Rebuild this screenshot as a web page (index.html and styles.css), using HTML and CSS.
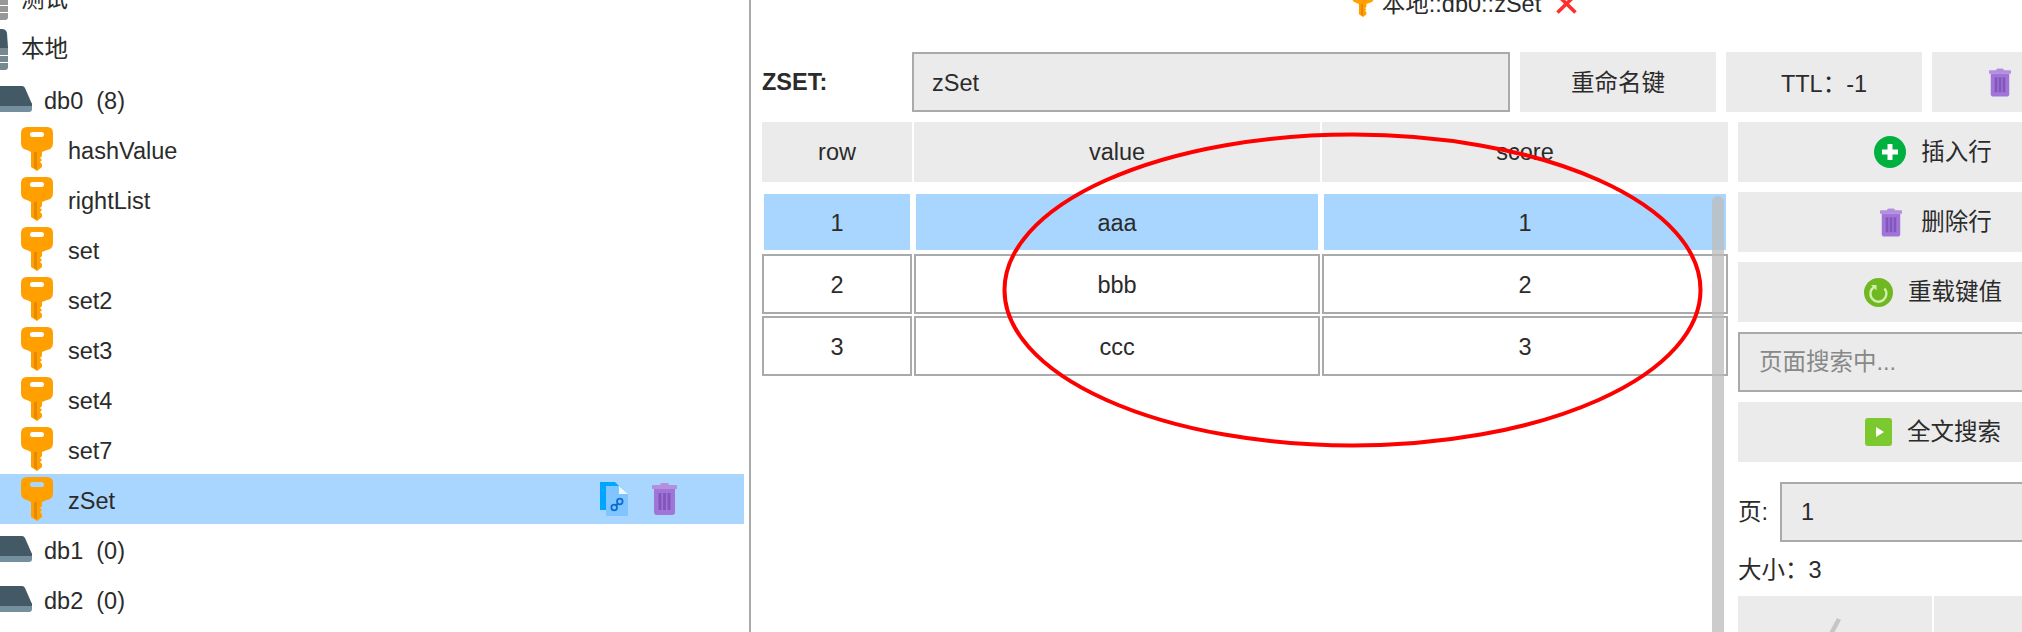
FILE: index.html
```html
<!DOCTYPE html>
<html lang="zh">
<head>
<meta charset="utf-8">
<title>本地::db0::zSet</title>
<link rel="stylesheet" href="styles.css">
</head>
<body>
<svg class="defs" width="0" height="0" aria-hidden="true">
  <symbol id="key" viewBox="0 0 32 44">
    <path fill="#ff9f00" fill-rule="evenodd" d="M6 0H26Q32 0 32 6V16Q32 22 26 23L21 25V29L19 31L21 33L19 35L21 37V40L16 44L10 40V25L6 23Q0 22 0 16V6Q0 0 6 0ZM11.5 5Q9 5 9 7.5T11.5 10H20.5Q23 10 23 7.5T20.5 5Z"/>
    <path fill="#e88a00" d="M13 25H16V42.5L13 40.5Z"/>
  </symbol>
  <symbol id="db" viewBox="0 0 40 26">
    <path fill="#74909e" d="M0 17H40V23Q40 26 37 26H3Q0 26 0 23Z"/>
    <path fill="#435a66" d="M6 0H30Q32 0 33 2L40 18V20H0V18L3 2Q4 0 6 0Z"/>
  </symbol>
  <symbol id="server" viewBox="0 0 32 41">
    <path fill="currentColor" d="M0 18H32V38Q32 41 29 41H3Q0 41 0 38Z" opacity=".72"/>
    <path fill="currentColor" d="M4 0H26Q30 0 31 4L32 19H0L1 4Q2 0 4 0Z"/>
    <path stroke="#fff" stroke-width="1" d="M0 26.5H32M0 33.5H32"/>
  </symbol>
  <symbol id="trash" viewBox="0 0 25 32">
    <path fill="#b48fdf" d="M8 2Q8 0 10 0H15Q17 0 17 2H24Q25 2 25 3V6H0V3Q0 2 1 2Z"/>
    <path fill="#a175d8" d="M2 6H23V29Q23 32 20 32H5Q2 32 2 29Z"/>
    <path fill="#8156bd" d="M6.5 10H9.5V27H6.5ZM11 10H14V27H11ZM15.5 10H18.5V27H15.5Z"/>
  </symbol>
  <symbol id="file" viewBox="0 0 28 34">
    <path fill="#00a5ff" d="M0 0H15L20 5V28H0Z"/>
    <path fill="#80c5ff" d="M6 4H20L28 12V34H6Z"/>
    <path fill="#eef8ff" d="M19 4L28 12H19Z"/>
    <g fill="none" stroke="#0b6fd0" stroke-width="1.8">
      <circle cx="14.2" cy="25.5" r="2.8"/>
      <circle cx="19.8" cy="19.5" r="2.8"/>
      <path d="M15.5 24L18.5 21"/>
    </g>
  </symbol>
  <symbol id="plus" viewBox="0 0 32 32">
    <circle cx="16" cy="16" r="16" fill="#00b140"/>
    <path fill="#fff" d="M13.5 8H18.5V13.5H24V18.5H18.5V24H13.5V18.5H8V13.5H13.5Z"/>
  </symbol>
  <symbol id="reload" viewBox="0 0 29 29">
    <circle cx="14.5" cy="14.5" r="14.5" fill="#6fb822"/>
    <path fill="none" stroke="#d3eeb0" stroke-width="2.4" d="M20.5 10.5A8 8 0 1 1 10 9"/>
    <path fill="#d3eeb0" d="M7 7H12.5V12.5Z"/>
  </symbol>
  <symbol id="play" viewBox="0 0 27 28">
    <rect width="27" height="28" rx="3" fill="#7cc92f"/>
    <path fill="#fff" d="M11 9L19 14L11 19Z"/>
  </symbol>
</svg>

<div class="app">
  <nav class="tree">
    <div class="row row-server idle"><svg class="ic-server"><use href="#server"/></svg><span class="cjk">测试</span></div>
    <div class="row row-server"><svg class="ic-server"><use href="#server"/></svg><span class="cjk">本地</span></div>
    <div class="row row-db"><svg class="ic-db"><use href="#db"/></svg><span class="latin">db0&nbsp; (8)</span></div>
    <div class="row row-key"><svg class="ic-key"><use href="#key"/></svg><span class="latin">hashValue</span></div>
    <div class="row row-key"><svg class="ic-key"><use href="#key"/></svg><span class="latin">rightList</span></div>
    <div class="row row-key"><svg class="ic-key"><use href="#key"/></svg><span class="latin">set</span></div>
    <div class="row row-key"><svg class="ic-key"><use href="#key"/></svg><span class="latin">set2</span></div>
    <div class="row row-key"><svg class="ic-key"><use href="#key"/></svg><span class="latin">set3</span></div>
    <div class="row row-key"><svg class="ic-key"><use href="#key"/></svg><span class="latin">set4</span></div>
    <div class="row row-key"><svg class="ic-key"><use href="#key"/></svg><span class="latin">set7</span></div>
    <div class="row row-key selected">
      <svg class="ic-key"><use href="#key"/></svg><span class="latin">zSet</span>
      <div class="row-actions">
        <svg class="ic-file"><use href="#file"/></svg>
        <svg class="ic-trash"><use href="#trash"/></svg>
      </div>
    </div>
    <div class="row row-db"><svg class="ic-db"><use href="#db"/></svg><span class="latin">db1&nbsp; (0)</span></div>
    <div class="row row-db"><svg class="ic-db"><use href="#db"/></svg><span class="latin">db2&nbsp; (0)</span></div>
  </nav>

  <main class="main">
    <div class="tab">
      <svg class="ic-tabkey"><use href="#key"/></svg>
      <span>本地::db0::zSet</span>
      <svg class="ic-close" viewBox="0 0 23 14"><path fill="none" stroke="#ff2d2d" stroke-width="3.6" d="M2.5 12.5L20.5 -5M20.5 12.5L2.5 -5"/></svg>
    </div>

    <div class="content">
      <div class="toolbar">
        <b class="type">ZSET:</b>
        <div class="field key-field"><span class="latin-sm">zSet</span></div>
        <div class="btn"><span class="cjk-sm">重命名键</span></div>
        <div class="btn"><span>TTL<span class="fw">：</span>-1</span></div>
        <div class="btn btn-icon"><svg class="ic-trash"><use href="#trash"/></svg><span>删除</span></div>
      </div>

      <div class="body">
        <section class="table">
          <div class="thead">
            <div class="th">row</div>
            <div class="th">value</div>
            <div class="th">score</div>
          </div>
          <div class="tbody">
            <div class="tr active"><div class="td">1</div><div class="td">aaa</div><div class="td">1</div></div>
            <div class="tr"><div class="td">2</div><div class="td">bbb</div><div class="td">2</div></div>
            <div class="tr"><div class="td">3</div><div class="td">ccc</div><div class="td">3</div></div>
          </div>
          <div class="scrollbar"></div>
        </section>

        <aside class="side">
          <div class="btn btn-icon"><svg class="ic-plus"><use href="#plus"/></svg><span class="cjk">插入行</span></div>
          <div class="btn btn-icon"><svg class="ic-trash"><use href="#trash"/></svg><span class="cjk">删除行</span></div>
          <div class="btn btn-icon"><svg class="ic-reload"><use href="#reload"/></svg><span class="cjk">重载键值</span></div>
          <div class="field placeholder"><span class="cjk">页面搜索中...</span></div>
          <div class="btn btn-icon"><svg class="ic-play"><use href="#play"/></svg><span class="cjk">全文搜索</span></div>
          <div class="page-line"><span class="page-label cjk">页:</span><div class="field page-field">1</div></div>
          <div class="size-line">大小<span class="fw">：</span>3</div>
          <div class="pager">
            <div class="btn"><svg class="ic-chev" viewBox="0 0 12 28"><path fill="none" stroke="#c6c6c6" stroke-width="4.4" d="M10 1L3 14L10 27"/></svg></div>
            <div class="btn"><svg class="ic-chev" viewBox="0 0 12 28"><path fill="none" stroke="#c6c6c6" stroke-width="4.4" d="M2 1L9 14L2 27"/></svg></div>
          </div>
        </aside>
      </div>
    </div>
  </main>

  <svg class="annotation" viewBox="0 0 2022 632" aria-hidden="true">
    <ellipse cx="1352.5" cy="290" rx="348" ry="155.5" fill="none" stroke="#ff0000" stroke-width="4"/>
  </svg>
</div>
</body>
</html>
```

FILE: styles.css
```css
* { box-sizing: border-box; }

html, body {
  margin: 0;
  padding: 0;
  background: #fff;
}

.defs { position: absolute; }

.app {
  position: relative;
  display: flex;
  width: 2022px;
  height: 632px;
  overflow: hidden;
  background: #fff;
  color: #2b2b2b;
  font-family: "Liberation Sans", "Noto Sans CJK SC", sans-serif;
  font-size: 23.5px;
}

/* baseline corrections: CJK sits a little high, Latin a little low */
.cjk { padding-bottom: 5px; }
.cjk-sm { padding-bottom: 2px; }
.latin { padding-top: 4px; }
.latin-sm { padding-top: 2px; }
.fw { font-family: "Noto Sans CJK TC", sans-serif; }

/* tree */
.tree {
  flex: none;
  width: 749px;
  margin-top: -26px;
  padding-right: 5px;
}

.row {
  display: flex;
  align-items: center;
  height: 50px;
}

.ic-server {
  flex: none;
  width: 32px;
  height: 41px;
  margin-left: -24px;
  margin-right: 13px;
  color: #435a66;
}
.idle .ic-server { color: #6f6f6f; }

.ic-db {
  flex: none;
  width: 40px;
  height: 26px;
  margin-left: -8px;
  margin-right: 12px;
}

.ic-key {
  flex: none;
  width: 32px;
  height: 44px;
  margin-left: 21px;
  margin-right: 15px;
}

.selected { background: #a9d6ff; }

.row-actions {
  display: flex;
  align-items: center;
  gap: 24px;
  margin-left: auto;
  margin-right: 67px;
}

.ic-file { width: 28px; height: 34px; }
.ic-trash { flex: none; width: 25px; height: 32px; }
.btn .ic-trash { width: 22px; height: 29px; margin-left: 6px; margin-right: 4px; }

/* main */
.main {
  flex: none;
  width: 1430px;
  border-left: 2px solid #aaa;
}

.tab {
  display: flex;
  align-items: center;
  justify-content: center;
  height: 30px;
  margin-top: -13px;
}

.ic-tabkey { width: 22px; height: 30px; margin-right: 8px; }
.ic-close { width: 23px; height: 14px; margin: 10px 0 0 14px; }

.content {
  width: 1377px;
  margin-top: 35px;
  padding-left: 11px;
}

.toolbar {
  display: flex;
  gap: 10px;
  height: 60px;
  margin-bottom: 10px;
}

.type {
  flex: none;
  width: 140px;
  align-self: center;
}

.field {
  display: flex;
  align-items: center;
  height: 60px;
  border: 2px solid #aaa;
  background: #ebebeb;
}

.key-field {
  flex: none;
  width: 598px;
  padding-left: 18px;
}

.btn {
  display: flex;
  flex: 1;
  align-items: center;
  justify-content: center;
  height: 60px;
  background: #ebebeb;
}

.toolbar .btn { flex: none; width: 196px; }

.btn-icon { gap: 15px; }

.body {
  display: flex;
  gap: 10px;
}

.table {
  position: relative;
  flex: none;
  width: 966px;
  height: 510px;
}

.thead,
.tr {
  display: grid;
  grid-template-columns: 150px 1fr 1fr;
  column-gap: 2px;
}

.th,
.td {
  display: flex;
  align-items: center;
  justify-content: center;
  height: 60px;
}

.th { background: #ebebeb; }
.td { border: 2px solid #aaa; padding-top: 2px; }

.tbody {
  display: flex;
  flex-direction: column;
  gap: 2px;
  margin-top: 10px;
}

.active .td {
  border-color: #fff;
  background: #a9d6ff;
}

.scrollbar {
  position: absolute;
  top: 74px;
  right: 4px;
  bottom: 0;
  width: 12px;
  border-radius: 6px 6px 0 0;
  background: rgba(188, 188, 188, 0.77);
}

.side {
  display: flex;
  flex: none;
  flex-direction: column;
  gap: 10px;
  width: 390px;
}

.side > .btn { flex: none; }

.ic-plus { flex: none; width: 32px; height: 32px; }
.ic-reload { flex: none; width: 29px; height: 29px; }
.ic-play { flex: none; width: 27px; height: 28px; }

.placeholder {
  padding-left: 19px;
  color: #888;
}

.page-line {
  display: flex;
  align-items: center;
  margin-top: 10px;
}

.page-label { flex: none; width: 42px; }

.page-field {
  flex: 1;
  padding-left: 19px;
}

.size-line {
  height: 34px;
  line-height: 32px;
}

.pager {
  display: flex;
  flex: none;
  gap: 2px;
}

.ic-chev { width: 12px; height: 28px; margin-top: 12px; }

.annotation {
  position: absolute;
  top: 0;
  left: 0;
  width: 2022px;
  height: 632px;
  pointer-events: none;
}
```
